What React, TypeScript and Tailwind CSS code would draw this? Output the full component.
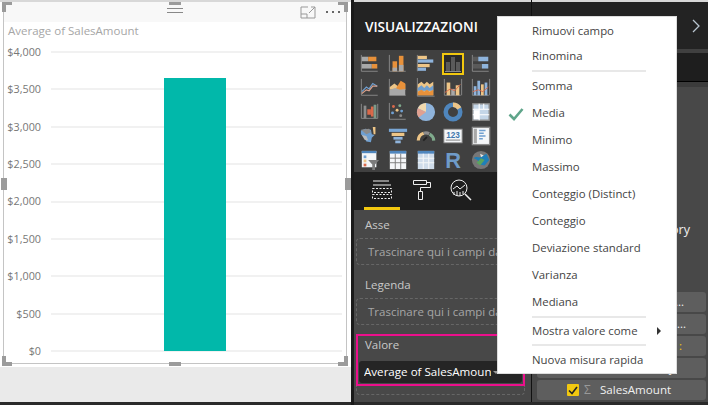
import React from "react";

const O = "#e8913a", G = "#a8a8a8", B = "#8fb4dc", T = "#edc587", A = "#8c8c8c", D = "#5a5a5a", R = "#d9694a";

const Axis = () => <path d="M1.5 1v18h18" fill="none" stroke={A} strokeWidth="1" />;

const icons: React.ReactNode[] = [
  <><Axis /><rect x="2" y="3" width="7" height="5" fill={G} /><rect x="9" y="3" width="9" height="5" fill={O} /><rect x="2" y="11" width="11" height="5" fill={G} /><rect x="13" y="11" width="6" height="5" fill={O} /></>,
  <><Axis /><rect x="5" y="8" width="5" height="11" fill={O} /><rect x="5" y="15" width="5" height="4" fill={G} /><rect x="12" y="2" width="5" height="17" fill={O} /><rect x="12" y="12" width="5" height="7" fill={G} /></>,
  <><path d="M1.5 1v18" stroke={A} /><rect x="2" y="2" width="10" height="3.5" fill={T} /><rect x="2" y="6" width="17" height="3.5" fill={B} /><rect x="2" y="11" width="13" height="3.5" fill={T} /><rect x="2" y="15" width="9" height="3.5" fill={B} /></>,
  <><rect x="1" y="1" width="20" height="20" fill="#2b2b2b" stroke="#f2c80f" strokeWidth="2" /><rect x="4" y="9" width="4" height="9" fill={D} /><rect x="9" y="4" width="4" height="14" fill={D} /><rect x="14" y="9" width="4" height="9" fill={D} /><path d="M3 18.5h16" stroke={A} /></>,
  <><path d="M1.5 1v18h18" fill="none" stroke={A} /><rect x="2" y="3" width="6" height="5" fill={D} /><rect x="8" y="3" width="11" height="5" fill={B} /><rect x="2" y="11" width="10" height="5" fill={D} /><rect x="12" y="11" width="7" height="5" fill={B} /></>,

  <><Axis /><path d="M2 15l5-5 3 2 4-6 5 3" fill="none" stroke="#6f9fd0" strokeWidth="1.3" /><path d="M2 17l5-4 3 1 4-5 5 0" fill="none" stroke="#d9a08a" strokeWidth="1.3" /></>,
  <><Axis /><path d="M2 10l5-4 4 3 4-5 4 3v6H2z" fill={T} /><path d="M9 11l5-8 5 3v7H9z" fill={O} /><path d="M2 13l6-2 5 2 6-1v7H2z" fill={G} /></>,
  <><path d="M1.5 0v20h19" fill="none" stroke={A} /><path d="M2 7l4-3 3 3 3-3 3 3 4-3v15H2z" fill={T} /><path d="M2 11l4-3 3 3 3-3 3 3 4-3v6H2z" fill="#6f9fd0" /><path d="M2 15l4-2 3 2 3-2 3 2 4-2v6H2z" fill={O} /></>,
  <><path d="M1.5 1v18h18M20.5 1v18" fill="none" stroke={A} /><rect x="4" y="5" width="4" height="14" fill={T} /><rect x="9" y="12" width="4" height="7" fill={G} /><rect x="14" y="8" width="4" height="11" fill={T} /><path d="M2 16l6-4 5 2 6-7" fill="none" stroke={R} /></>,
  <><path d="M1.5 1v18h18M20.5 1v18" fill="none" stroke={A} /><rect x="3" y="9" width="3" height="10" fill={B} /><rect x="7" y="3" width="3" height="16" fill={B} /><rect x="11" y="7" width="3" height="12" fill={T} /><rect x="15" y="5" width="3" height="14" fill={B} /><path d="M2 15l6-2 5 2 6-5" fill="none" stroke={R} /></>,

  <><path d="M1.5 2v16h18M19.5 2v16" fill="none" stroke={A} /><rect x="4" y="4" width="3" height="14" fill={A} /><rect x="8" y="8" width="4" height="6" fill={R} /><rect x="12" y="5" width="3" height="11" fill={R} /><rect x="15" y="3" width="3" height="15" fill="#7d9a8a" /></>,
  <><Axis /><circle cx="6" cy="5" r="1.6" fill={R} /><circle cx="13" cy="4" r="1.6" fill="#7faa8c" /><circle cx="10" cy="9" r="1.6" fill={T} /><circle cx="5" cy="12" r="1.6" fill="#6f9fd0" /><circle cx="15" cy="10" r="1.6" fill="#6f9fd0" /><circle cx="14" cy="15" r="1.6" fill={A} /></>,
  <><circle cx="11" cy="11" r="10" fill={B} /><path d="M11 11V1a10 10 0 0 0-9 6z" fill="#f1d9ae" /><path d="M11 11L2 7a10 10 0 0 0 1 10z" fill="#e0a090" /></>,
  <><circle cx="11" cy="11" r="8" fill="none" stroke="#4f86bd" strokeWidth="5" /><path d="M11 3a8 8 0 0 1 7 4" fill="none" stroke={T} strokeWidth="5" /></>,
  <><rect x="2" y="2" width="18" height="18" fill="#c4d6e8" stroke={A} strokeWidth="1.5" /><path d="M2 8h18M2 14h18M9 2v18M14 2v6" stroke="#fff" strokeWidth="1.2" /><rect x="3" y="9" width="6" height="10" fill="#fff" /></>,

  <><path d="M1 5l5-2 6 1 1 5 3 1-3 3-1 5-5-1-3-5-3-3z" fill="#6f9fd0" /><path d="M1 4l9-1 2 4-5 2z" fill={A} /><path d="M2 10l5 1 2 5-4-1z" fill="#bbb" /><path d="M14 1h3v8h-2z" fill={T} /></>,
  <><rect x="1" y="3" width="20" height="3.5" fill="#7aa7d6" /><rect x="4" y="7.5" width="14" height="3.5" fill={T} /><rect x="6" y="12" width="10" height="3" fill={B} /><rect x="8" y="16" width="6" height="3" fill={B} /></>,
  <><path d="M2.5 16a8.5 8.5 0 0 1 6-8" fill="none" stroke={T} strokeWidth="3.5" /><path d="M8.5 8a8.5 8.5 0 0 1 6 .5" fill="none" stroke={A} strokeWidth="3.5" /><path d="M15 9a8.5 8.5 0 0 1 4.5 7" fill="none" stroke="#7faa8c" strokeWidth="3.5" /><path d="M8 16l4-4" stroke="#222" strokeWidth="2" /></>,
  <><rect x="1" y="3.5" width="20" height="15" fill="#f4f6f8" stroke={A} /><text x="11" y="13" textAnchor="middle" fontSize="9" fontWeight="700" fontFamily="Liberation Sans, sans-serif" fill="#3e76ae">123</text><path d="M3 15.5h16" stroke="#777" /></>,
  <><rect x="1.5" y="1.5" width="19" height="19" fill="#f4f6f8" stroke={A} strokeWidth="1.5" /><rect x="3" y="3" width="3.5" height="16" fill={G} /><path d="M9 5h7M9 8h5M9 11h7M9 14h4" stroke="#6f9fd0" strokeWidth="1.5" /></>,

  <><rect x="2" y="1" width="16" height="18" fill="#f4f6f8" /><rect x="2" y="1" width="16" height="2.5" fill="#4f86bd" /><rect x="4" y="6" width="3" height="3" fill="#6f9fd0" /><rect x="4" y="10.5" width="3" height="3" fill={T} /><rect x="4" y="15" width="3" height="3" fill={R} /><path d="M9 11h12l-4.5 5v6h-3v-6z" fill="#7c7c7c" /></>,
  <><rect x="2" y="1" width="18" height="20" fill="#f4f6f8" /><rect x="2" y="1" width="18" height="3" fill="#4f86bd" /><path d="M2 9h18M2 14h18M8 4v17M14 4v17" stroke="#777" strokeWidth="1" /></>,
  <><rect x="2" y="1" width="18" height="20" fill="#cfdcea" /><rect x="2" y="1" width="18" height="3" fill="#4f86bd" /><path d="M2 9h18M2 14h18M8 4v17M14 4v17" stroke="#f4f6f8" strokeWidth="1.2" /></>,
  <><text x="11" y="20" textAnchor="middle" fontSize="24" fontWeight="700" fontFamily="Liberation Sans, sans-serif" fill="#6f9bc8">R</text></>,
  <><circle cx="11" cy="11" r="10" fill="#777" /><path d="M3 9c4-3 6 1 9-2l5-3 3 7-5 6-5-1-3-5z" fill="#1f7fb8" /><path d="M6 14l5-5 4 2-5 6z" fill="#5aa45f" /><path d="M10 4l4 2-3 2z" fill="#e6e6e6" /></>,
];

const yLabels = ["$4,000", "$3,500", "$3,000", "$2,500", "$2,000", "$1,500", "$1,000", "$500", "$0"];
const Sep = ({ cls }: { cls: string }) => <div className={`h-[2px] bg-[#e8e8e8] ml-[34px] w-[114px] ${cls}`} />;
const Item = ({ children, check, h = "h-[27px]" }: { children: React.ReactNode; check?: boolean; h?: string }) => (
  <div className={`${h} pl-[34px] pr-[14px] flex items-center relative`}>
    {check && (
      <svg width="16" height="14" viewBox="0 0 16 14" className="absolute left-[10px] top-[8px]">
        <path d="M1.5 7.5l4.5 4.5L14.5 2" fill="none" stroke="#5fa58a" strokeWidth="2.6" />
      </svg>
    )}
    {children}
  </div>
);
const DropBox = () => (
  <div className="mx-[2px] h-[27px] border border-dashed border-[#666] rounded-[4px] pl-[11px] flex items-center text-[11.5px] text-[#a6a6a6] whitespace-nowrap overflow-hidden">
    Trascinare qui i campi dati
  </div>
);
const Handle = ({ cls }: { cls: string }) => <div className={`absolute bg-[#9b9b9b] ${cls}`} />;

const Row = ({ children, cls = "" }: { children?: React.ReactNode; cls?: string }) => (
  <div className={`h-[20px] mb-[2px] rounded-[3px] bg-[#5e5e5e] flex items-center text-[11.6px] text-[#f0f0f0] ${cls}`}>{children}</div>
);
const Check = ({ on }: { on?: boolean }) => (
  <>
    <span className={`w-[12px] h-[12px] rounded-[1px] flex items-center justify-center mr-[5px] ${on ? "bg-[#f2c80f]" : "bg-[#c8c8c8]"}`}>
      {on && <svg width="10" height="9" viewBox="0 0 10 9"><path d="M1 4.5L4 7.5 9 1" fill="none" stroke="#222" strokeWidth="1.6" /></svg>}
    </span>
    <span className="text-[#999] w-[16px] text-[12px]">Σ</span>
  </>
);

export default function App() {
  return (
    <div className="relative w-[708px] h-[405px] flex overflow-hidden bg-[#2a2a2a]" style={{ fontFamily: '"Open Sans", sans-serif' }}>
      {/* canvas */}
      <div className="w-[351px] shrink-0 h-[402px] bg-[#eaeaea] flex flex-col">
        <div className="relative h-[367px] bg-white border-t-2 border-[#d8d8d8] pl-[3px] pr-[4px] pb-[3px]">
          <div className="h-full border-x border-b border-[#c4c4c4] flex flex-col">
            <div className="h-[20px] bg-[#f8f8f8] flex items-center justify-end">
              <svg width="16" height="13" viewBox="0 0 16 13" className="mr-[10px]">
                <path d="M8 1H1v11h14V5M1 8h6v4M9 7l6-6M11 1h4v4" fill="none" stroke="#999" />
              </svg>
              <div className="flex gap-[4px] mr-[6px]">
                <span className="w-[2px] h-[2px] bg-[#666]" /><span className="w-[2px] h-[2px] bg-[#666]" /><span className="w-[2px] h-[2px] bg-[#666]" />
              </div>
            </div>
            <div className="pl-[4px] h-[18px] flex items-center text-[11.5px] text-[#a6a6a6] whitespace-nowrap">Average of SalesAmount</div>
            <div className="relative h-[299px] mt-[12px] flex flex-col justify-between">
              {yLabels.map((l) => (
                <div key={l} className="h-0 flex items-center">
                  <span className="w-[37px] text-right text-[10.8px] text-[#777]">{l}</span>
                  <span className="ml-[10px] w-[291px] h-[2px] bg-[#f1f1f1]" />
                </div>
              ))}
              <div className="absolute left-[160px] bottom-0 w-[62px] h-[273px] bg-[#01b8aa]" />
            </div>
          </div>
          {/* handles */}
          <Handle cls="left-[2px] top-[0px] w-[10px] h-[3px]" />
          <Handle cls="left-[2px] top-[0px] w-[4px] h-[10px]" />
          <Handle cls="right-[3px] top-[0px] w-[10px] h-[3px]" />
          <Handle cls="right-[3px] top-[0px] w-[4px] h-[10px]" />
          <Handle cls="left-[169px] top-[0px] w-[12px] h-[3px]" />
          <Handle cls="left-[2px] bottom-[1px] w-[10px] h-[4px]" />
          <Handle cls="left-[2px] bottom-[1px] w-[4px] h-[10px]" />
          <Handle cls="right-[3px] bottom-[1px] w-[10px] h-[4px]" />
          <Handle cls="right-[3px] bottom-[1px] w-[4px] h-[10px]" />
          <Handle cls="left-[169px] bottom-[1px] w-[12px] h-[4px]" />
          <div className="absolute left-[167px] top-[6px] w-[16px] h-[5px] border-y border-[#888]" />
          <Handle cls="left-[1px] top-[176px] w-[6px] h-[12px]" />
          <Handle cls="right-0 top-[176px] w-[6px] h-[12px]" />
        </div>
      </div>
      <div className="w-[3px] shrink-0 h-full bg-[#1a1a1a]" />

      {/* visualizations */}
      <div className="w-[178px] shrink-0 h-[402px] flex flex-col border-r border-[#111]">
        <div className="h-[50px] bg-[#232323] border-t-[2px] border-[#d8d8d8] flex items-center pl-[11px] pt-[2px] text-white text-[13.6px] font-semibold whitespace-nowrap">VISUALIZZAZIONI</div>
        <div className="h-[122px] bg-[#404040] pt-[2px] pl-[2.5px]">
          <div className="grid grid-cols-[repeat(5,27.7px)] auto-rows-[24px]">
            {icons.map((ic, i) => (
              <div key={i} className="flex items-center justify-center">
                <svg width={i === 3 ? 22 : 20} height={i === 3 ? 22 : 20} viewBox="0 0 22 22" className="block">{ic}</svg>
              </div>
            ))}
          </div>
        </div>
        <div className="h-[38px] bg-[#1e1e1e] flex">
          <div className="w-[10px]" />
          <div className="w-[36px] h-full border-b-[3px] border-[#f2c80f] flex items-center justify-center">
            <svg width="22" height="20" viewBox="0 0 22 20"><path d="M2 1h16M2 5h18" stroke="#eee" /><path d="M1.5 8.5h19v4h-19zM1.5 14.5h19v4h-19z" fill="none" stroke="#eee" strokeDasharray="2 1.5" /></svg>
          </div>
          <div className="w-[44px] flex items-center justify-center pb-[3px]">
            <svg width="20" height="22" viewBox="0 0 20 22"><path d="M1.5 1.5h13v4h-13zM14.5 3.5h4v5H8.5v4" fill="none" stroke="#eee" /><path d="M6.5 12.5h4v8h-4z" fill="none" stroke="#eee" /></svg>
          </div>
          <div className="w-[34px] flex items-center justify-center pb-[3px]">
            <svg width="22" height="22" viewBox="0 0 22 22"><circle cx="9" cy="9" r="8" fill="none" stroke="#eee" /><path d="M15 15l6 6" stroke="#eee" strokeWidth="1.5" /><path d="M3 10l4-3 3 3 5-4M4 13v3M7 12v5M10 13v4M13 12v3" fill="none" stroke="#eee" /></svg>
          </div>
        </div>
        <div className="flex-1 bg-[#484848] pt-[5px] pr-[4px]">
          <div className="h-[23px] pb-[3px] flex items-center pl-[11px] text-[11.5px] text-[#c8c8c8]">Asse</div>
          <DropBox />
          <div className="h-[33px] pt-[6px] flex items-center pl-[11px] text-[11.5px] text-[#c8c8c8]">Legenda</div>
          <DropBox />
          <div className="mt-[9px] ml-[2px] w-[169px] h-[52px] border-2 border-[#ec0f8c] flex flex-col">
            <div className="h-[25px] pb-[8px] flex items-center pl-[7px] text-[11.5px] text-[#c8c8c8]">Valore</div>
            <div className="mx-[1px] h-[22px] rounded-[3px] bg-[#252525] flex items-center pl-[5px] text-[11.6px] text-white whitespace-nowrap font-medium relative">
              <span className="w-[127px] overflow-hidden">Average of SalesAmount</span>
              <span className="ml-[2px] w-0 h-0 border-x-[3px] border-x-transparent border-t-[3px] border-t-[#999]" />
              <span className="absolute right-[6px] top-[4px] text-[#ccc] text-[12px] leading-none">×</span>
            </div>
          </div>
          <div className="mx-[2px] h-[9px] border-b border-x border-dashed border-[#666] rounded-b-[4px]" />
        </div>
      </div>

      {/* fields */}
      <div className="flex-1 h-[402px] flex flex-col">
        <div className="h-[50px] bg-[#232323] border-t-[2px] border-[#d8d8d8] flex items-center justify-end pr-[7px]">
          <svg width="9" height="14" viewBox="0 0 9 14"><path d="M1 1l6 6-6 6" fill="none" stroke="#b9c6d0" strokeWidth="1.3" /></svg>
        </div>
        <div className="h-[4px] bg-[#404040]" />
        <div className="h-[29px] bg-[#1e1e1e] border-b border-black" />
        <div className="h-[5px] bg-[#3b3b3b]" />
        <div className="flex-1 bg-[#484848] pl-[5px] pr-[2px]">
          <div className="h-[205px] flex justify-end pr-[16px] pt-[134px] text-[12.5px] text-[#f0f0f0]">Category</div>
          <Row cls="justify-end pr-[22px]">…</Row>
          <Row cls="justify-end pr-[20px]">…</Row>
          <Row cls="justify-end pr-[24px] text-[#f2c80f]">:</Row>
          <Row cls="pl-[30px]"><Check /><span>SalesQuantity</span></Row>
          <Row cls="pl-[30px]"><Check on />SalesAmount</Row>
        </div>
      </div>

      {/* context menu */}
      <div className="absolute left-[497px] top-[16px] w-[180px] h-[358px] bg-white border border-[#ddd] text-[11.4px] text-[#444]">
        <Item>Rimuovi campo</Item>
        <Item h="h-[24px]">Rinomina</Item>
        <Sep cls="mt-[2px]" />
        <Item>Somma</Item>
        <Item check>Media</Item>
        <Item>Minimo</Item>
        <Item>Massimo</Item>
        <Item>Conteggio (Distinct)</Item>
        <Item>Conteggio</Item>
        <Item>Deviazione standard</Item>
        <Item>Varianza</Item>
        <Item>Mediana</Item>
        <Sep cls="mt-[1px]" />
        <Item h="h-[25px]">
          Mostra valore come
          <span className="absolute right-[15px] top-[9px] w-0 h-0 border-y-[4px] border-y-transparent border-l-[4px] border-l-[#333]" />
        </Item>
        <Sep cls="mt-[1px]" />
        <Item h="h-[28px]">Nuova misura rapida</Item>
      </div>
    </div>
  );
}
